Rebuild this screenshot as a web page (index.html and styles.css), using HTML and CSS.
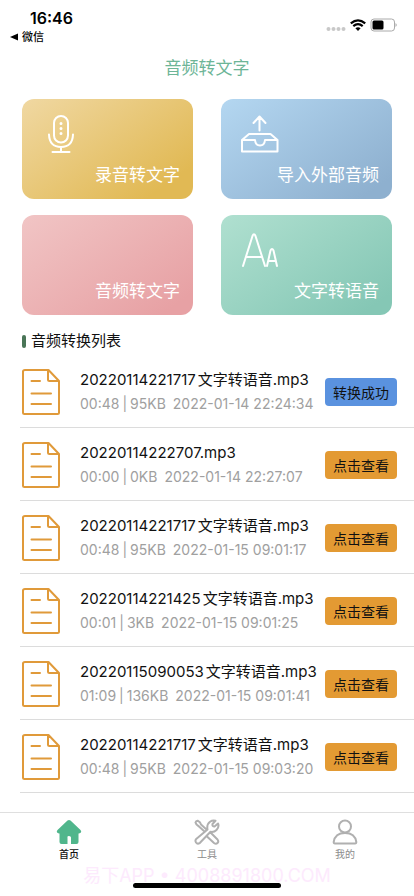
FILE: index.html
```html
<!DOCTYPE html>
<html lang="zh-CN">
<head>
<meta charset="utf-8">
<meta name="viewport" content="width=device-width, initial-scale=1">
<title>音频转文字</title>
<link rel="stylesheet" href="styles.css">
</head>
<body>
<svg class="defs" width="0" height="0" aria-hidden="true">
  <symbol id="doc" viewBox="0 0 38 46">
    <path d="M3 1H26.500L37 12V43.500Q37 45 35.500 45H2.500Q1 45 1 43.500V2.500Q1 1 3 1Z M26 1V10.500Q26 12 27.500 12H37 M9.500 12H18 M9.500 24.500H29 M9.500 35H29"/>
  </symbol>
</svg>
<div class="app">
  <header class="status">
    <div class="status-left">
      <div class="time">16:46</div>
      <a class="back" href="#"><svg width="8" height="8" viewBox="0 0 8 8"><path d="M8 .5V7.500L0 4Z"/></svg>微信</a>
    </div>
    <div class="status-right">
      <svg class="signal" width="20" height="6" viewBox="0 0 20 6" fill="#c8c8c8"><circle cx="2.500" cy="3" r="2"/><circle cx="7.500" cy="3" r="2"/><circle cx="12.500" cy="3" r="2"/><circle cx="17.500" cy="3" r="2"/></svg>
      <svg width="16" height="12" viewBox="0 0 16 12" fill="none" stroke="#000" stroke-width="2.200"><path d="M.8 4.400Q8-1.800 15.200 4.400M3.300 7.200Q8 3.200 12.700 7.200"/><path d="M5.400 9.200Q8 7.200 10.600 9.200L8 11.900Z" fill="#000" stroke="none"/></svg>
      <svg width="28" height="14" viewBox="0 0 28 14"><rect x="1" y="1" width="23.500" height="12" rx="3" fill="none" stroke="#aaa"/><rect x="2.500" y="2.500" width="11" height="9" rx="1.500"/><path d="M25.500 5Q28 7 25.500 9Z" fill="#aaa"/></svg>
    </div>
  </header>
  <h1 class="title">音频转文字</h1>
  <main>
    <nav class="cards" aria-label="功能">
      <a class="card gold" href="#">
        <svg width="50" height="44" viewBox="0 0 50 44"><rect x="18" y="4" width="14" height="26.500" rx="7"/><path d="M13 22.500Q13.500 35 25 35T37 22.500M25 35V40M16.500 40H33.500"/><path class="dots" d="M25 11.500v.1M25 16.500v.1M25 21.500v.1"/></svg>
        <span>录音转文字</span>
      </a>
      <a class="card blue" href="#">
        <svg width="50" height="44" viewBox="0 0 50 44"><path d="M24.500 18.500V5M18.500 11L24.500 4.500L30.500 11M7 28L14 22H35.500L42.500 28V39.500H7ZM7 28H20Q20.500 33.500 25 33.500T30 28H42.500"/></svg>
        <span>导入外部音频</span>
      </a>
      <a class="card pink" href="#"><span>音频转文字</span></a>
      <a class="card green" href="#">
        <svg width="50" height="44" viewBox="0 0 50 44"><path d="M8 38L17.500 8Q19 4.500 20.500 8L30 38M12 29H26M32 38L35.500 22.500Q37 19.500 38.500 22.500L42 38M33.500 33H40.500"/></svg>
        <span>文字转语音</span>
      </a>
    </nav>
    <h2 class="section">音频转换列表</h2>
    <ul class="list">
      <li class="row"><svg class="doc"><use href="#doc"/></svg><div class="info"><div class="name"><span>20220114221717</span><span>文字转语音.mp3</span></div><div class="meta"><span>00:48</span><span>|</span><span>95KB</span><time>2022-01-14 22:24:34</time></div></div><button class="btn done" type="button">转换成功</button></li>
      <li class="row"><svg class="doc"><use href="#doc"/></svg><div class="info"><div class="name"><span>20220114222707.mp3</span></div><div class="meta"><span>00:00</span><span>|</span><span>0KB</span><time>2022-01-14 22:27:07</time></div></div><button class="btn" type="button">点击查看</button></li>
      <li class="row"><svg class="doc"><use href="#doc"/></svg><div class="info"><div class="name"><span>20220114221717</span><span>文字转语音.mp3</span></div><div class="meta"><span>00:48</span><span>|</span><span>95KB</span><time>2022-01-15 09:01:17</time></div></div><button class="btn" type="button">点击查看</button></li>
      <li class="row"><svg class="doc"><use href="#doc"/></svg><div class="info"><div class="name"><span>20220114221425</span><span>文字转语音.mp3</span></div><div class="meta"><span>00:01</span><span>|</span><span>3KB</span><time>2022-01-15 09:01:25</time></div></div><button class="btn" type="button">点击查看</button></li>
      <li class="row"><svg class="doc"><use href="#doc"/></svg><div class="info"><div class="name"><span>20220115090053</span><span>文字转语音.mp3</span></div><div class="meta"><span>01:09</span><span>|</span><span>136KB</span><time>2022-01-15 09:01:41</time></div></div><button class="btn" type="button">点击查看</button></li>
      <li class="row"><svg class="doc"><use href="#doc"/></svg><div class="info"><div class="name"><span>20220114221717</span><span>文字转语音.mp3</span></div><div class="meta"><span>00:48</span><span>|</span><span>95KB</span><time>2022-01-15 09:03:20</time></div></div><button class="btn" type="button">点击查看</button></li>
    </ul>
  </main>
  <footer class="bottom">
    <nav class="tabs">
      <a class="tab active" href="#"><svg width="26" height="26" viewBox="0 0 26 26"><path d="M11.500 1.500Q13 .3 14.500 1.500L24.500 11Q26.500 14 23 14.500H22.500V23Q22.500 25 20.500 25H15V18.500Q15 17 13 17T11.500 18.500V25H5.500Q3.500 25 3.500 23V14.500H3Q-.5 14 1.500 11Z"/></svg>首页</a>
      <a class="tab" href="#"><svg width="26" height="26" viewBox="0 0 26 26"><path d="M10.500 12.500L5 7.500Q2 6 1.500 3.500Q2 1.500 4 1.800Q6.500 3 7 5.500L12.500 10.500M16.500 13.500L23.500 20.500Q25 22.500 23.500 24T20 24L13 17.500M2.200 20L13.500 10.500Q12.500 5.500 16 2.800Q18.500 1 21.500 1.800L18.500 5Q18 7.500 20.500 7.500L24 4.500Q25.500 8 22.500 11Q20 13.500 16.500 12.800L6 23.800Q3.500 25.500 2 23.500Q.8 21.500 2.200 20Z"/></svg>工具</a>
      <a class="tab" href="#"><svg width="26" height="26" viewBox="0 0 26 26"><circle cx="13" cy="7.500" r="6"/><path d="M3 24.500Q1.500 24.500 1.700 23Q3 14 13 14T24.300 23Q24.500 24.500 23 24.500Z"/></svg>我的</a>
    </nav>
    <div class="watermark">易下APP • 4008891800.COM</div>
    <div class="home-bar"></div>
  </footer>
</div>
</body>
</html>
```
FILE: styles.css
```css
* { box-sizing: border-box; }
body {
  margin: 0;
  background: #fff;
  color: #111;
  font-family: Inter, "Noto Sans CJK SC", sans-serif;
}
a { color: inherit; text-decoration: none; }
.defs { position: absolute; }
.app { min-height: 100vh; display: flex; flex-direction: column; }
main { flex: 1; }

.status { display: flex; justify-content: space-between; padding: 8px 16px 0 10px; color: #000; }
.time { padding-left: 20px; font-size: 16px; line-height: 20px; font-weight: 600; }
.back { display: flex; align-items: center; gap: 4px; font-size: 11px; line-height: 18px; font-weight: 500; }
.status-right { display: flex; align-items: center; gap: 4px; height: 34px; }
.signal { margin-top: 8px; }

.title { margin: 10px 0 0; text-align: center; font-size: 17px; line-height: 24px; font-weight: 400; color: #6db597; }

.cards { display: grid; grid-template-columns: 1fr 1fr; gap: 16px 28px; padding: 19px 22px 0; }
.card {
  display: flex; flex-direction: column; justify-content: space-between;
  height: 100px; padding: 13px 13px 12px 14px; border-radius: 12px;
  color: #fff; font-size: 17px; line-height: 24px;
}
.card span { margin-top: auto; text-align: right; }
.card svg { flex: none; fill: none; stroke: #fff; stroke-width: 2; stroke-linecap: round; stroke-linejoin: round; }
.card .dots { stroke-width: 3; }
.gold { background: linear-gradient(145deg, #f0d8a2, #e1b954 85%); }
.blue { background: linear-gradient(145deg, #b4d7f1, #8eb0cf 90%); }
.pink { background: linear-gradient(145deg, #f1c5c5, #e7a1a4 90%); }
.green { background: linear-gradient(145deg, #b0e0d0, #85c7b5 90%); }

.section { display: flex; align-items: center; gap: 5px; margin: 15px 22px 0; font-size: 15px; line-height: 22px; font-weight: 400; }
.section::before { content: ""; width: 4px; height: 13px; border-radius: 2px; background: #4a7557; }

.list { list-style: none; margin: 3px 0 0; padding: 0 0 0 20px; }
.row { display: flex; align-items: center; height: 73px; padding: 2px 17px 0 2px; border-bottom: 1px solid #dcdcdc; }
.doc { flex: none; width: 38px; height: 46px; margin-right: 20px; fill: none; stroke: #e09a3a; stroke-width: 2; stroke-linecap: round; stroke-linejoin: round; }
.info { flex: 1; min-width: 0; white-space: nowrap; }
.name { display: flex; gap: 2px; font-size: 15px; line-height: 24px; }
.meta { display: flex; gap: 3px; font-size: 14px; line-height: 24px; color: #a0a0a0; }
.meta time { margin-left: 4px; }
.btn { flex: none; width: 72px; height: 28px; padding: 0; border: 0; border-radius: 4px; background: #e39a33; color: #111; font: inherit; font-size: 14px; }
.done { background: #5a92df; }

.bottom { position: relative; height: 84px; border-top: 1px solid #dfdfdf; }
.tabs { display: grid; grid-template-columns: repeat(3, 1fr); padding-top: 6px; }
.tab { display: flex; flex-direction: column; align-items: center; gap: 2px; font-size: 10px; line-height: 14px; color: #8c8c8c; }
.tab svg { fill: none; stroke: #b0b0b0; stroke-width: 2; stroke-linejoin: round; }
.tab.active { color: #111; font-weight: 500; }
.tab.active svg { fill: #50b68c; stroke: none; }
.watermark { position: absolute; left: 0; right: 0; bottom: 8px; text-align: center; font-size: 18px; line-height: 24px; color: #fdeafd; white-space: nowrap; }
.home-bar { position: absolute; left: 50%; bottom: 8px; width: 148px; height: 5px; margin-left: -74px; border-radius: 3px; background: #000; }
```
